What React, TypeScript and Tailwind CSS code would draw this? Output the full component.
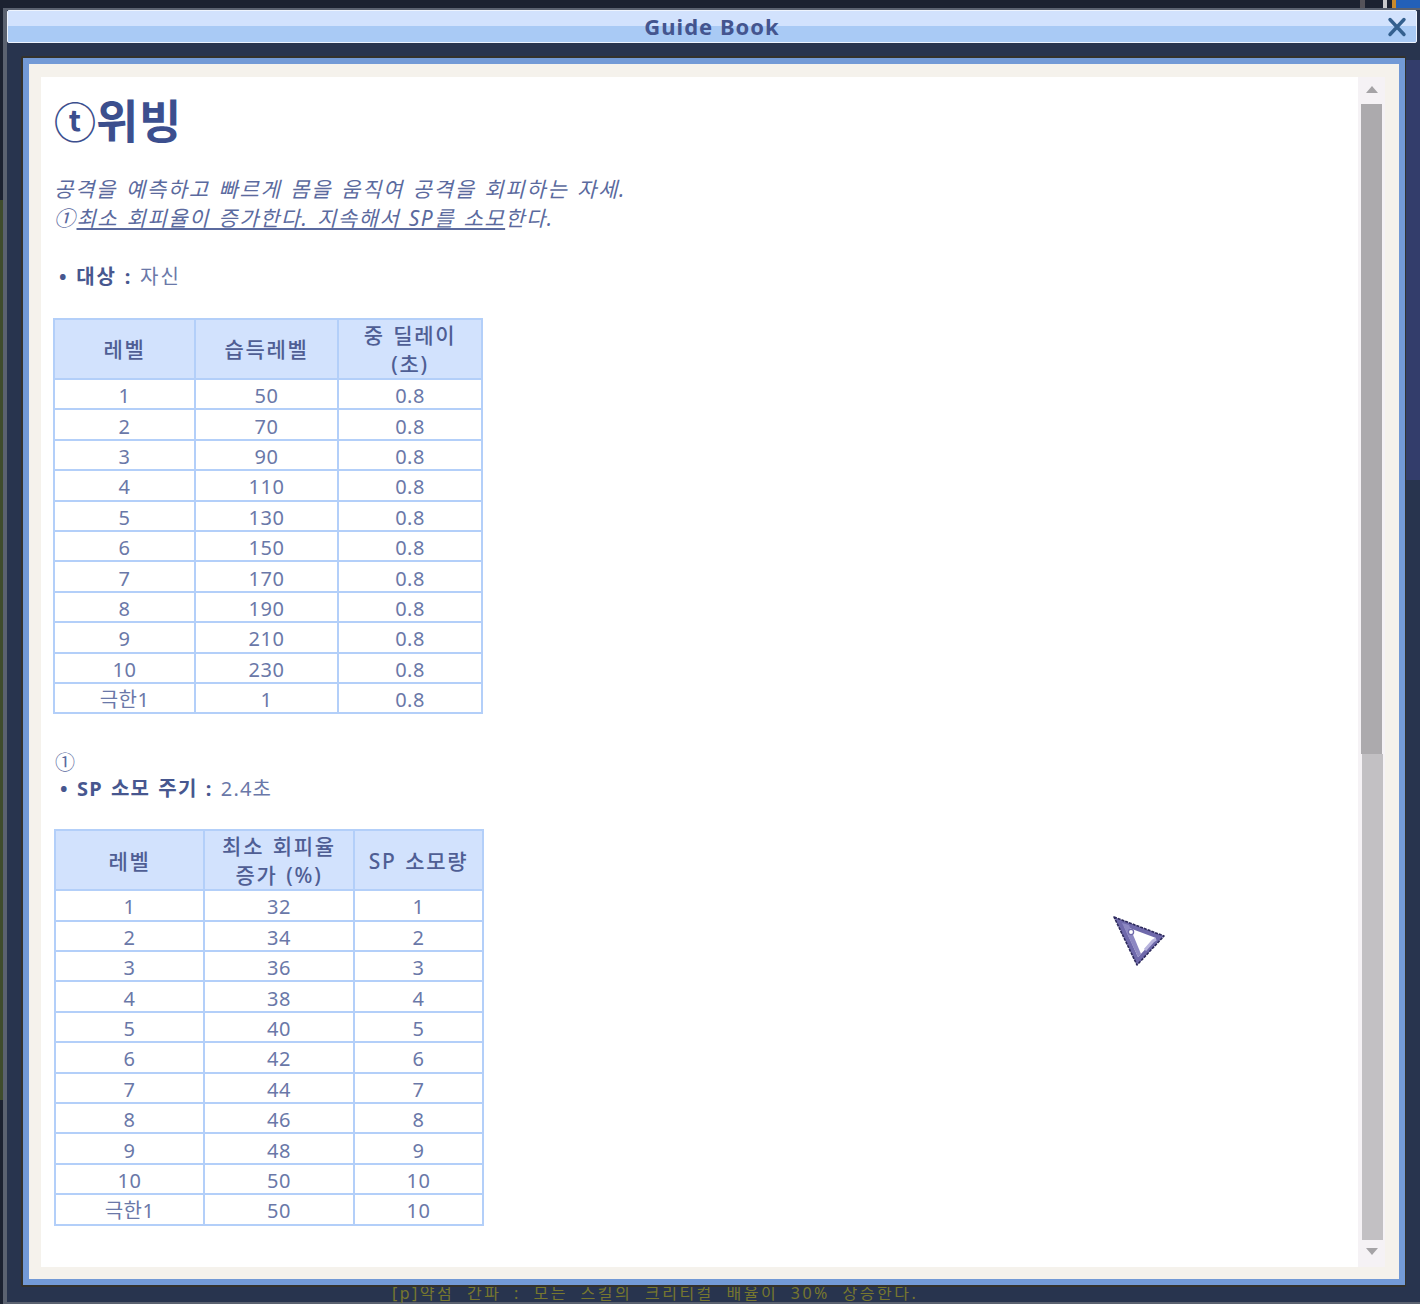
const font = { fontFamily: '"Noto Sans", "Noto Sans CJK KR", sans-serif' };

const rows1 = [
  ["1", "50", "0.8"],
  ["2", "70", "0.8"],
  ["3", "90", "0.8"],
  ["4", "110", "0.8"],
  ["5", "130", "0.8"],
  ["6", "150", "0.8"],
  ["7", "170", "0.8"],
  ["8", "190", "0.8"],
  ["9", "210", "0.8"],
  ["10", "230", "0.8"],
  ["극한1", "1", "0.8"],
];

const rows2 = [
  ["1", "32", "1"],
  ["2", "34", "2"],
  ["3", "36", "3"],
  ["4", "38", "4"],
  ["5", "40", "5"],
  ["6", "42", "6"],
  ["7", "44", "7"],
  ["8", "46", "8"],
  ["9", "48", "9"],
  ["10", "50", "10"],
  ["극한1", "50", "10"],
];

function SkillTable({
  widths,
  head,
  rows,
  className,
}: {
  widths: number[];
  head: string[][];
  rows: string[][];
  className: string;
}) {
  return (
    <table className={"table-fixed border-collapse " + className}>
      <colgroup>
        {widths.map((w, i) => (
          <col key={i} style={{ width: w }} />
        ))}
      </colgroup>
      <thead>
        <tr className="h-[60px]">
          {head.map((lines, i) => (
            <th
              key={i}
              className="border-2 border-[#b3cff9] bg-[#d2e2fd] p-0 pt-[1px] text-center text-[21px] leading-[28.5px] font-medium tracking-[1.7px] text-[#4f5e94] [word-spacing:1.5px]"
            >
              {lines.map((l) => (
                <div key={l}>{l}</div>
              ))}
            </th>
          ))}
        </tr>
      </thead>
      <tbody>
        {rows.map((r) => (
          <tr key={r[0]} className="h-[30.4px]">
            {r.map((c, i) => (
              <td
                key={i}
                className="border-2 border-[#b3cff9] p-0 pt-[3px] text-center text-[20px] leading-[25px] font-normal tracking-[0.5px] text-[#6a78a8]"
              >
                {c}
              </td>
            ))}
          </tr>
        ))}
      </tbody>
    </table>
  );
}

function Cursor() {
  return (
    <svg className="absolute left-[1112px] top-[914px]" width="56" height="54" viewBox="0 0 56 54">
      <path d="M2 3 L52 22 L25 51 Z" fill="#6f69ab" stroke="#2d2a5c" strokeWidth="1.6" strokeLinejoin="round" strokeDasharray="3 1" />
      <path d="M12 12 L44 24 L26 43 Z" fill="#ffffff" />
      <path d="M10 9 L17 11 L29 40 L26 43 Z" fill="#8d88c2" />
      <circle cx="19" cy="18" r="2.6" fill="#ffffff" stroke="#6f69ab" strokeWidth="1.3" />
      <path d="M33 36 L41 27 L44 25" fill="none" stroke="#b9b5de" strokeWidth="3" />
    </svg>
  );
}

export default function App() {
  return (
    <div style={font} className="relative flex h-[1304px] w-[1420px] flex-col overflow-hidden bg-[#1c2231]">
      {/* bits of the game showing round the window */}
      <div className="absolute left-0 top-[200px] h-[900px] w-[3px] bg-[#3f4c2c]" />
      <div className="absolute left-[1360px] top-0 h-[8px] w-[5px] bg-[#55535a]" />
      <div className="absolute left-[1383px] top-0 h-[8px] w-[4px] bg-[#c9c9cc]" />
      <div className="absolute left-[1392px] top-0 h-[8px] w-[4px] bg-[#c98a2c]" />
      <div className="absolute left-[1396px] top-0 h-[8px] w-[24px] bg-[#2360b8]" />

      {/* window frame */}
      <div className="relative mt-[8px] ml-[3px] flex h-[1292px] flex-1 flex-col border-t-2 border-b-2 border-l-4 border-[#5b6270] bg-[#28344e]">
        <div className="absolute right-0 top-[50px] h-[420px] w-[15px] bg-[#333d6b]" />

        {/* title bar */}
        <div className="relative h-[33px] w-[1410px] shrink-0 overflow-hidden rounded-[2px] border border-[#eef4fe] bg-[#a9caf5]">
          <div className="h-[15px] bg-[#d2e2fd]" />
          <div className="absolute inset-0 flex items-center justify-center pb-[2px] text-[22px] leading-none font-bold tracking-[1px] text-[#44558f]">
            Guide Book
          </div>
          <svg className="absolute right-[8px] top-[5px]" width="22" height="22" viewBox="0 0 22 22">
            <path d="M4 3.5 L18 18.5 M18 3.5 L4 18.5" stroke="#34608f" strokeWidth="3.4" strokeLinecap="round" />
          </svg>
        </div>

        {/* inner panel */}
        <div className="relative mt-[13px] ml-[14px] h-[1231px] w-[1385px] shrink-0 rounded-[2px] border-t-2 border-r border-b-2 border-l-2 border-[#34322c]">
          <div className="flex h-full flex-col border-[6px] border-[#739ad6] bg-[#f5f2ec] pt-[13px] pr-[12px] pb-[12px] pl-[12px]">
            <div className="flex min-h-0 flex-1">
              {/* page */}
              <div className="w-[1317px] bg-white pl-[13px] text-[#47578f]">
                <h1 className="mt-[12px] h-[62px] text-[46px] leading-[62px] font-bold text-[#3c4f8e]">
                  <span className="text-[42px]">ⓣ</span>
                  <span className="tracking-[0.6px]">위빙</span>
                </h1>
                <p className="mt-[24px] text-[21px] leading-[29px] tracking-[1.7px] text-[#5b6a9e] italic [word-spacing:1.5px]">
                  공격을 예측하고 빠르게 몸을 움직여 공격을 회피하는 자세.
                  <br />
                  <span className="tracking-[1.5px]">
                    ①<span className="underline">최소 회피율이 증가한다. 지속해서 SP를 소모</span>한다.
                  </span>
                </p>
                <p className="mt-[29px] pl-[5px] text-[20px] leading-[29px] tracking-[2px] [word-spacing:0.5px]">
                  <span className="font-bold">• 대상 : </span>
                  <span className="text-[#6a78a8]">자신</span>
                </p>
                <SkillTable
                  className="mt-[27px] -ml-[1px] w-[428px]"
                  widths={[141, 143, 144]}
                  head={[["레벨"], ["습득레벨"], ["중 딜레이", "(초)"]]}
                  rows={rows1}
                />
                <div className="mt-[35px] pl-[1px] text-[20px] leading-[27px] text-[#5b6a9e]">①</div>
                <p className="pl-[6px] text-[20px] leading-[26px] tracking-[1.2px] [word-spacing:1.8px]">
                  <span className="font-bold">• SP 소모 주기 : </span>
                  <span className="text-[#6a78a8]">2.4초</span>
                </p>
                <SkillTable
                  className="mt-[27px] w-[428px]"
                  widths={[149, 150, 129]}
                  head={[["레벨"], ["최소 회피율", "증가 (%)"], ["SP 소모량"]]}
                  rows={rows2}
                />
              </div>

              {/* scrollbar */}
              <div className="flex w-[27px] flex-col items-center bg-[#f5f2f5] px-[3px]">
                <div className="mt-[9px] h-0 w-0 border-x-[6px] border-b-[7px] border-x-transparent border-b-[#a5a3a6]" />
                <div className="mt-[11px] h-[650px] w-[21px] bg-[#acaaad]" />
                <div className="ml-[1px] h-[486px] w-[21px] bg-[#c2c0c3]" />
                <div className="mt-[8px] h-0 w-0 border-x-[6px] border-t-[7px] border-x-transparent border-t-[#a5a3a6]" />
              </div>
            </div>
          </div>
        </div>

        {/* game text behind the window */}
        <div className="ml-[385px] h-[13px] text-[16px] leading-[13px] tracking-[2.5px] whitespace-nowrap text-[#77772f] [word-spacing:6px]">
          [p]약점 간파 : 모든 스킬의 크리티컬 배율이 30% 상승한다.
        </div>
      </div>

      <Cursor />
    </div>
  );
}
